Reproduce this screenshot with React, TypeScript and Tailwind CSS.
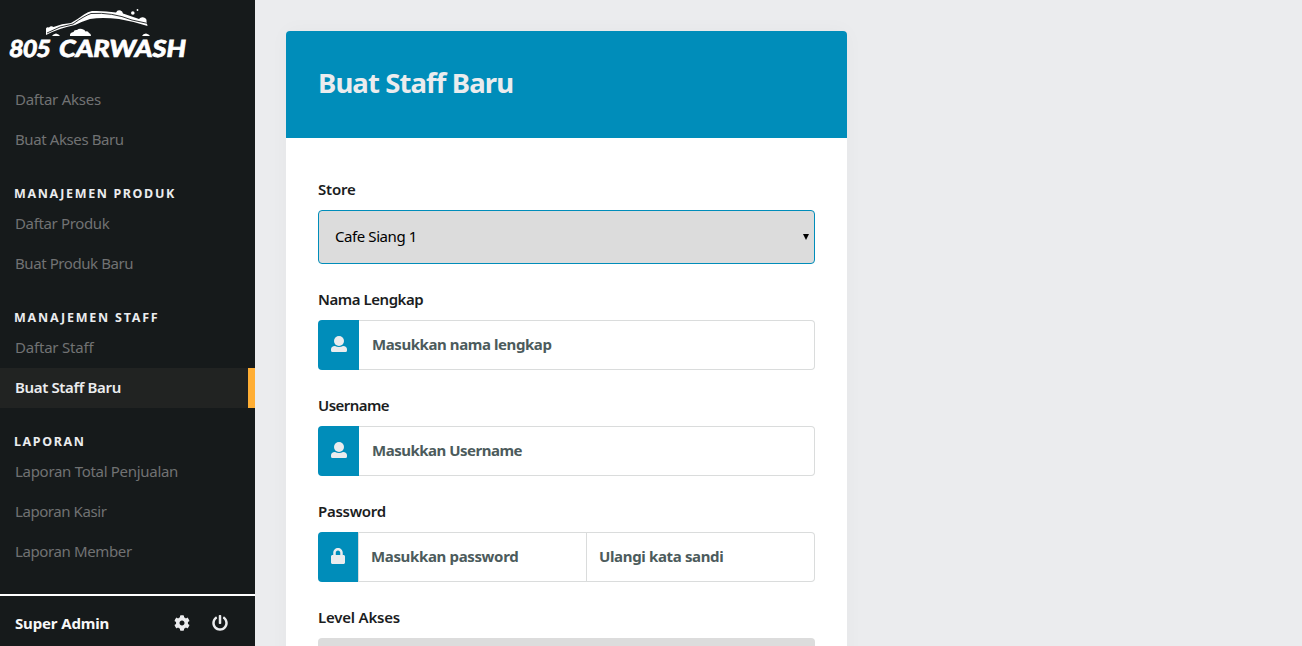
import React from "react";
import { FaCog, FaLock, FaPowerOff } from "react-icons/fa";

type Item = { label: string; track: string; active?: boolean };
type Section = { title?: string; track?: string; items: Item[] };

const sections: Section[] = [
  {
    items: [
      { label: "Daftar Akses", track: "tracking-[-0.25px]" },
      { label: "Buat Akses Baru", track: "tracking-[-0.4px]" },
    ],
  },
  {
    title: "MANAJEMEN PRODUK",
    track: "tracking-[1.62px]",
    items: [
      { label: "Daftar Produk", track: "tracking-[-0.35px]" },
      { label: "Buat Produk Baru", track: "tracking-[-0.42px]" },
    ],
  },
  {
    title: "MANAJEMEN STAFF",
    track: "tracking-[1.78px]",
    items: [
      { label: "Daftar Staff", track: "tracking-[-0.2px]" },
      { label: "Buat Staff Baru", track: "tracking-[-0.35px]", active: true },
    ],
  },
  {
    title: "LAPORAN",
    track: "tracking-[1.6px]",
    items: [
      { label: "Laporan Total Penjualan", track: "tracking-[-0.3px]" },
      { label: "Laporan Kasir", track: "tracking-[-0.43px]" },
      { label: "Laporan Member", track: "tracking-[-0.38px]" },
    ],
  },
];

function Logo() {
  return (
    <svg width="200" height="68" viewBox="0 0 200 68" className="block shrink-0" fill="#fff">
      <path d="M46 35V28.500Q47 26.500 49 27.500Q51 25.500 53.500 27Q62 23.500 71 23Q78 19 84 14.500Q88 11.500 92 11Q104 10.500 116 12.500Q117.500 9.500 120.500 10.500Q122.500 11 123 13.500L139 19Q141 16.500 144 17.500Q147 18.500 146.500 21.500L147.500 26Q134 21.500 119 19Q102 17 90 19Q82 21.500 75 25Q58 28.500 46 35Z" />
      <path d="M47 33Q60 25.500 73 24Q84 16 91 13.500Q112 12 132 20L148 23.500" fill="none" stroke="#161a1b" strokeWidth="0.9" />
      <circle cx="132.800" cy="13" r="1.800" />
      <circle cx="137.500" cy="10" r="0.900" />
      <path d="M52 36Q53 34 56 33.500Q59 34 60 36Z" />
      <path d="M70 36Q69.500 32.500 73.500 32Q74 29.500 77 30Q79 28 82 29Q85 29.500 85.500 31.500Q88 30.500 89 33Q91 33.500 91 36Z" />
      <path d="M142 36Q143 33.500 146 33.500Q149 34 150 36Z" />
      <g fontFamily="Lato, sans-serif" fontWeight="900" fontSize="23.500" stroke="#fff" strokeWidth="0.7" transform="translate(0 56.500) skewX(-8)">
        <text x="8.500" y="0" textLength="41" lengthAdjust="spacingAndGlyphs">805</text>
        <text x="58" y="0" textLength="127" lengthAdjust="spacingAndGlyphs">CARWASH</text>
      </g>
    </svg>
  );
}

function Sidebar() {
  return (
    <aside className="flex h-full w-[255px] shrink-0 flex-col bg-[#161a1b]">
      <Logo />
      <nav className="flex flex-1 flex-col pt-3">
        {sections.map((s, i) => (
          <div key={i} className="mb-[22px]">
            {s.title && (
              <h3 className={`flex h-[22px] items-center pt-0.5 pl-[14px] text-[12.5px] font-bold text-[#ebecee] ${s.track}`}>{s.title}</h3>
            )}
            {s.items.map((it) => (
              <a
                key={it.label}
                className={`flex h-10 items-center pb-0.5 pl-[15px] text-[15px] whitespace-nowrap ${it.track} ${
                  it.active ? "border-r-[7px] border-[#ffae34] bg-[#212322] font-semibold text-[#ebecee]" : "text-[#717273]"
                }`}
              >
                {it.label}
              </a>
            ))}
          </div>
        ))}
      </nav>
      <footer className="flex h-[52px] shrink-0 items-center border-t-2 border-white pt-1 pl-[15px]">
        <span className="w-[159px] text-[15px] font-bold tracking-[-0.15px] text-[#f7f7f7]">Super Admin</span>
        <FaCog className="mr-[22px] text-base text-[#ebecee]" />
        <FaPowerOff className="text-base text-[#ebecee]" />
      </footer>
    </aside>
  );
}

function PersonIcon() {
  return (
    <svg width="16" height="16" viewBox="0 0 16 16" fill="#ebecee">
      <circle cx="8" cy="5" r="5" />
      <path d="M0 14.500V13.500Q0 10 4 10Q8 12 12 10Q16 10 16 13.500V14.500Q16 16 14.500 16H1.500Q0 16 0 14.500Z" />
    </svg>
  );
}

function Label({ children, track }: { children: string; track: string }) {
  return <label className={`flex h-[30px] items-start text-[15px] leading-[18px] font-semibold text-[#1b1d1e] ${track}`}>{children}</label>;
}

function Field({ label, labelTrack, placeholder, track }: { label: string; labelTrack: string; placeholder: string; track: string }) {
  return (
    <div className="mb-[26px]">
      <Label track={labelTrack}>{label}</Label>
      <div className="flex h-[50px]">
        <span className="flex w-[41px] items-center justify-center rounded-l bg-[#008dba] pb-0.5">
          <PersonIcon />
        </span>
        <div className={`flex flex-1 items-center rounded-r border border-l-0 border-[#dadcdc] pb-0.5 pl-[13px] text-[15px] font-bold text-[#4c5b5c] ${track}`}>
          {placeholder}
        </div>
      </div>
    </div>
  );
}

export default function App() {
  return (
    <div className="flex h-[646px] w-[1302px] overflow-hidden bg-[#ebecee] font-['Noto_Sans',sans-serif]">
      <Sidebar />
      <main className="pt-[31px] pl-[31px]">
        <section className="w-[561px] rounded shadow-[0_0_20px_rgba(0,0,0,0.03)]">
          <header className="flex h-[107px] items-center rounded-t bg-[#008dba] pb-1 pl-8 text-[27.5px] font-bold tracking-[-0.9px] text-[#ebecee]">
            Buat Staff Baru
          </header>
          <form className="h-[600px] bg-white px-8 pt-[42px]">
            <Label track="tracking-[-0.2px]">Store</Label>
            <div className="mb-[26px] flex h-[54px] items-center justify-between rounded border border-[#008dba] bg-[#dcdcdc] pr-[5px] pl-4 text-[15px] tracking-[-0.42px] text-black">
              <span className="pb-0.5">Cafe Siang 1</span>
              <span className="border-x-[3px] border-t-[6px] border-x-transparent border-t-black" />
            </div>
            <Field label="Nama Lengkap" labelTrack="tracking-[-0.45px]" placeholder="Masukkan nama lengkap" track="tracking-[-0.42px]" />
            <Field label="Username" labelTrack="tracking-[-0.55px]" placeholder="Masukkan Username" track="tracking-[-0.5px]" />
            <Label track="tracking-[-0.28px]">Password</Label>
            <div className="mb-[26px] flex h-[50px] text-[15px] font-bold tracking-[-0.35px] text-[#4c5b5c]">
              <span className="flex w-10 items-center justify-center rounded-l bg-[#008dba] pb-0.5">
                <FaLock className="text-base text-[#ebecee]" />
              </span>
              <div className="flex w-[229px] items-center border border-[#dadcdc] pb-0.5 pl-3">Masukkan password</div>
              <div className="flex flex-1 items-center rounded-r border border-l-0 border-[#dadcdc] pb-0.5 pl-3">Ulangi kata sandi</div>
            </div>
            <Label track="tracking-[-0.2px]">Level Akses</Label>
            <div className="h-[54px] rounded bg-[#dcdcdc]" />
          </form>
        </section>
      </main>
    </div>
  );
}
